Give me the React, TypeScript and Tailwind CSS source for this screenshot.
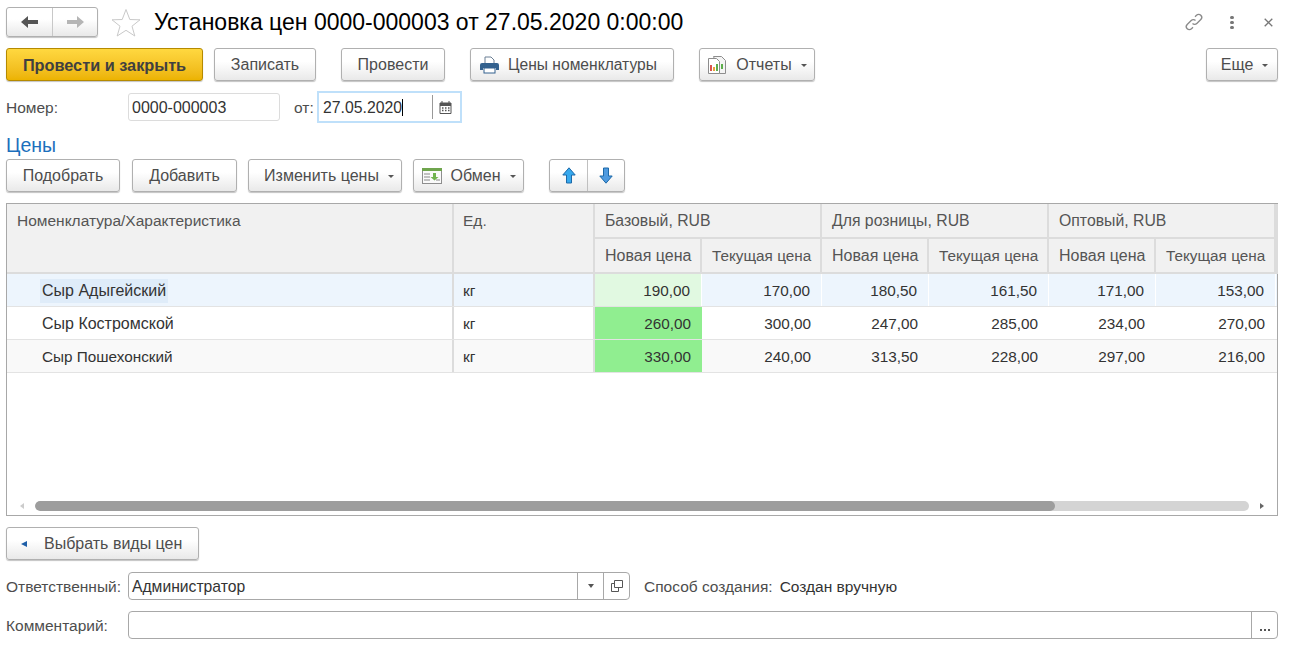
import { type FC, type ReactNode } from "react";

const Caret: FC = () => <span className="ml-[9px] mt-[1px] h-0 w-0 border-x-[3px] border-t-[3px] border-x-transparent border-t-[#555]" />;

const Btn: FC<{ w: string; children: ReactNode; className?: string }> = ({ w, children, className }) => (
  <button
    className={`flex h-[33px] shrink-0 items-center justify-center rounded-[3px] border border-[#b0b0b0] bg-gradient-to-b from-white from-40% to-[#e9e9e9] text-[16px] text-[#4d4d4d] shadow-[0_1px_1px_#c4c4c4] ${w} ${className ?? ""}`}
  >
    {children}
  </button>
);

const PrinterIcon: FC = () => (
  <svg width="19" height="18" viewBox="0 0 19 18" className="mr-[9px]">
    <path d="M6 1h5l3 3v4H5V1z" fill="#fff" stroke="#6b7f94" />
    <path d="M2 7h15a2 2 0 0 1 2 2v5h-3v-2H3v2H0V9a2 2 0 0 1 2-2z" fill="#33618e" />
    <rect x="4" y="12" width="11" height="5" fill="#fff" stroke="#33618e" />
  </svg>
);

const ReportIcon: FC = () => (
  <svg width="20" height="20" viewBox="0 0 20 20" className="mr-[9px]">
    <path d="M6.500 1.500h8l4 4v13h-6z" fill="#f4f4f4" stroke="#8d8d8d" />
    <path d="M1.500 3.500h8l3 3v12h-11z" fill="#fff" stroke="#8d8d8d" />
    <rect x="3" y="10" width="2" height="6" fill="#d9534f" />
    <rect x="6" y="12" width="2" height="4" fill="#e9a23b" />
    <rect x="9" y="9" width="2" height="7" fill="#5cae4c" />
    <rect x="14" y="9" width="2" height="5" fill="#5cae4c" />
  </svg>
);

const ExchangeIcon: FC = () => (
  <svg width="20" height="18" viewBox="0 0 20 18" className="mr-[9px]">
    <rect x=".5" y="1.500" width="19" height="15" fill="#fafafa" stroke="#8e8e8e" />
    <rect x="0" y="1" width="20" height="3" fill="#6fa54d" />
    <path d="M2 7h6M2 10h6M2 13h6M14 13h4" stroke="#888" />
    <path d="M11 6v4H8.500l4 3.500 4-3.500H14V6z" fill="#71b34f" />
  </svg>
);

const ArrowV: FC<{ down?: boolean }> = ({ down }) => (
  <svg width="14" height="17" viewBox="0 0 14 17" className={down ? "rotate-180" : ""}>
    <path d="M7 .8 13.200 8H9.500v8h-5V8H.8z" fill={down ? "#4f9be0" : "#37a9ee"} stroke="#1d69a8" />
  </svg>
);

const columns = "grid-cols-[447px_141px_107px_120px_107px_120px_107px_120px_1fr]";

const rows = [
  { name: "Сыр Адыгейский", values: ["190,00", "170,00", "180,50", "161,50", "171,00", "153,00"] },
  { name: "Сыр Костромской", values: ["260,00", "300,00", "247,00", "285,00", "234,00", "270,00"] },
  { name: "Сыр Пошехонский", values: ["330,00", "240,00", "313,50", "228,00", "297,00", "216,00"] },
];

const Head: FC<{ children?: ReactNode; className?: string }> = ({ children, className }) => (
  <div className={`whitespace-nowrap border-b-2 border-r-2 border-b-[#dcdcdc] border-r-[#dcdcdc] bg-[#f1f1f1] text-[#555] ${className ?? "px-[10px]"}`}>{children}</div>
);

const App: FC = () => {
  return (
    <div className="h-[649px] w-[1298px] overflow-hidden bg-white pl-[6px] pt-[7px] text-[15.5px] leading-[18px] text-[#4d4d4d] [font-family:'Liberation_Sans',Arial,sans-serif]">
      <div className="flex h-[30px] w-[1272px] items-center">
        <div className="flex h-[30px] w-[92px] rounded-[3px] border border-[#b0b0b0] bg-gradient-to-b from-white from-40% to-[#e9e9e9] shadow-[0_1px_1px_#c4c4c4]">
          <div className="flex w-[46px] items-center justify-center border-r border-[#c8c8c8]">
            <svg width="18" height="12" viewBox="0 0 18 12"><path d="M7 0v4h10v4H7v4L0 6z" fill="#555" /></svg>
          </div>
          <div className="flex flex-1 items-center justify-center">
            <svg width="18" height="12" viewBox="0 0 18 12"><path d="M11 0v4H1v4h10v4l7-6z" fill="#b5b5b5" /></svg>
          </div>
        </div>
        <svg width="30" height="29" viewBox="0 0 30 29" className="ml-[13px]">
          <path d="M15 1.500 18.800 11.500 29 11.800 21 18.200 23.800 28 15 22.300 6.200 28 9 18.200 1 11.800 11.200 11.500z" fill="#fff" stroke="#c9c9c9" />
        </svg>
        <h1 className="ml-[13px] text-[23px] leading-[30px] text-black">Установка цен 0000-000003 от 27.05.2020 0:00:00</h1>
        <div className="ml-auto flex items-center">
          <svg width="20" height="20" viewBox="0 0 20 20" fill="none" stroke="#8a8a8a" strokeWidth="1.300">
            <path d="M8.500 11.500a3 3 0 0 0 4.300 0l4-4a3 3 0 0 0-4.300-4.300l-1.500 1.500" />
            <path d="M11.500 8.500a3 3 0 0 0-4.300 0l-4 4a3 3 0 0 0 4.300 4.300l1.500-1.500" />
          </svg>
          <div className="ml-[26px] flex w-[4px] flex-col gap-[2px]">
            <span className="h-[3px] w-[4px] rounded-full bg-[#777]" />
            <span className="h-[3px] w-[4px] rounded-full bg-[#777]" />
            <span className="h-[3px] w-[4px] rounded-full bg-[#777]" />
          </div>
          <svg width="9" height="9" viewBox="0 0 9 9" className="ml-[30px] mr-[5px]" stroke="#777" strokeWidth="1.300">
            <path d="M.7.7l7.600 7.600M8.300.7.700 8.300" />
          </svg>
        </div>
      </div>

      <div className="mt-[11px] flex w-[1272px]">
        <button className="flex h-[33px] w-[197px] items-center justify-center rounded-[3px] border border-[#b58a00] bg-gradient-to-b from-[#ffd83f] to-[#ecb300] text-[16.300px] font-bold text-[#404040] shadow-[0_1px_1px_#c4c4c4]">
          Провести и закрыть
        </button>
        <Btn w="w-[102px]" className="ml-[11px]">Записать</Btn>
        <Btn w="w-[104px]" className="ml-[25px]">Провести</Btn>
        <Btn w="w-[204px]" className="ml-[25px] !justify-start pl-[9px] !text-[15.600px]"><PrinterIcon />Цены номенклатуры</Btn>
        <Btn w="w-[116px]" className="ml-[25px]"><ReportIcon />Отчеты<Caret /></Btn>
        <Btn w="w-[72px]" className="ml-auto pl-[5px]">Еще<Caret /></Btn>
      </div>

      <div className="mt-[10px] flex h-[32px] items-center">
        <span className="w-[122px] pt-[2px]">Номер:</span>
        <div className="flex h-[28px] w-[152px] items-center rounded-[3px] border border-[#dcdcdc] px-[3px] pt-[2px] text-[16px] text-[#333]">0000-000003</div>
        <span className="ml-[14px] w-[23px] pt-[2px]">от:</span>
        <div className="flex h-[32px] w-[145px] items-center border-2 border-[#bfe0fa] text-[#333]">
          <span className="ml-[4px] w-[110px] border-r border-[#999] text-[15.800px] leading-[24px]">
            <span className="relative top-[1px] border-r border-black">27.05.2020</span>
          </span>
          <svg width="13" height="13" viewBox="0 0 13 13" className="ml-[6px]">
            <path d="M1 2h11v10.500H1z" fill="#fff" stroke="#555" />
            <path d="M1 2h11v3H1z" fill="#555" />
            <path d="M3 0v3M10 0v3" stroke="#555" />
            <path d="M3 7h1.500M6 7h1.500M9 7h1.500M3 9.500h1.500M6 9.500h1.500M9 9.500h1.500" stroke="#555" strokeWidth="1.500" />
          </svg>
        </div>
      </div>

      <h2 className="mt-[12px] text-[19.500px] font-normal leading-[21px] text-[#1c6fbc]">Цены</h2>

      <div className="mt-[3px] flex">
        <Btn w="w-[114px]">Подобрать</Btn>
        <Btn w="w-[105px]" className="ml-[12px]">Добавить</Btn>
        <Btn w="w-[154px]" className="ml-[11px] pl-[8px]">Изменить цены<Caret /></Btn>
        <Btn w="w-[111px]" className="ml-[11px]"><ExchangeIcon />Обмен<Caret /></Btn>
        <div className="ml-[25px] flex h-[33px] w-[76px] rounded-[3px] border border-[#b0b0b0] bg-gradient-to-b from-white from-40% to-[#e9e9e9] shadow-[0_1px_1px_#c4c4c4]">
          <div className="flex w-[38px] items-center justify-center border-r border-[#c0c0c0]"><ArrowV /></div>
          <div className="flex flex-1 items-center justify-center"><ArrowV down /></div>
        </div>
      </div>

      <div className="mt-[11px] flex h-[313px] w-[1272px] flex-col border border-[#a8a8a8] text-[#333]">
        <div className={`grid h-[70px] ${columns} grid-rows-[35px_35px]`}>
          <Head className="row-span-2 px-[10px] pt-[8px]">Номенклатура/Характеристика</Head>
          <Head className="row-span-2 px-[9px] pt-[8px]">Ед.</Head>
          <Head className="col-span-2 px-[10px] pt-[8px] text-[15.800px]">Базовый, RUB</Head>
          <Head className="col-span-2 px-[10px] pt-[8px] text-[15.800px]">Для розницы, RUB</Head>
          <Head className="col-span-2 px-[10px] pt-[8px] text-[15.800px]">Оптовый, RUB</Head>
          <Head className="row-span-2 px-0" />
          {[0, 1, 2].flatMap((i) => [
            <Head key={`n${i}`} className="px-[10px] pt-[8px] text-[16px]">Новая цена</Head>,
            <Head key={`c${i}`} className="px-[10px] pt-[8px] text-[15.300px]">Текущая цена</Head>,
          ])}
        </div>
        {rows.map((row, r) => (
          <div
            key={row.name}
            className={`grid h-[33px] ${columns} border-b border-[#e3e3e3] ${r === 0 ? "bg-[#edf5fd]" : r === 2 ? "bg-[#f9f9f9]" : "bg-white"}`}
          >
            <div className={`flex items-center border-r-2 border-[#dcdcdc] pl-[33px] pt-[1px] ${r === 2 ? "text-[15.300px]" : "text-[16px]"}`}>
              <span className={`px-[2px] leading-[24px] ${r === 0 ? "bg-[#dfecf9]" : ""}`}>{row.name}</span>
            </div>
            <div className="flex items-center border-r-2 border-[#dcdcdc] pl-[9px] pt-[2px]">кг</div>
            {row.values.map((value, i) => (
              <div
                key={i}
                className={`flex items-center justify-end pr-[11px] pt-[2px] text-[15.300px] ${i === 0 ? (r === 0 ? "bg-[#e1f9e1]" : "bg-[#90ee90]") : ""} ${r === 0 ? "border-r border-white" : ""}`}
              >
                {value}
              </div>
            ))}
          </div>
        ))}
        <div className="mt-auto mb-[4px] flex h-[10px] items-center">
          <span className="ml-[13px] h-0 w-0 border-y-[3px] border-r-[4px] border-y-transparent border-r-[#ccc]" />
          <div className="ml-[11px] h-[10px] w-[1214px] overflow-hidden rounded-full bg-[#d4d4d4]">
            <div className="h-[10px] w-[1020px] rounded-full bg-[#9d9d9d]" />
          </div>
          <span className="ml-[11px] h-0 w-0 border-y-[3px] border-l-[4px] border-y-transparent border-l-[#666]" />
        </div>
      </div>

      <Btn w="w-[193px]" className="mt-[11px] !justify-start pl-[14px]">
        <span className="mr-[17px] h-0 w-0 border-y-[3.500px] border-r-[6px] border-y-transparent border-r-[#1f5fa8]" />
        Выбрать виды цен
      </Btn>

      <div className="mt-[12px] flex h-[28px] items-center">
        <span className="w-[122px] pt-[2px]">Ответственный:</span>
        <div className="flex h-[28px] w-[502px] rounded-[4px] border border-[#a8a8a8]">
          <span className="flex flex-1 items-center pl-[3px] pt-[2px] text-[15.700px] text-[#333]">Администратор</span>
          <span className="flex w-[26px] items-center justify-center border-l border-[#a8a8a8]">
            <span className="h-0 w-0 border-x-[3px] border-t-[4px] border-x-transparent border-t-[#555]" />
          </span>
          <span className="flex w-[26px] items-center justify-center border-l border-[#a8a8a8]">
            <svg width="12" height="12" viewBox="0 0 12 12" fill="none" stroke="#555">
              <path d="M3.500.5h8v7h-8z" />
              <path d="M3.500 3.500h-3v8h7v-4" />
            </svg>
          </span>
        </div>
        <span className="ml-[14px] pt-[2px]">Способ создания:</span>
        <span className="ml-[7px] pt-[2px] text-[#333]">Создан вручную</span>
      </div>

      <div className="mt-[11px] flex h-[28px] items-center">
        <span className="w-[122px] pt-[2px]">Комментарий:</span>
        <div className="flex h-[28px] w-[1150px] justify-end rounded-[4px] border border-[#a8a8a8]">
          <span className="flex w-[26px] items-end justify-center gap-[2px] border-l border-[#a8a8a8] pb-[7px]">
            <span className="h-[2px] w-[2px] bg-[#555]" />
            <span className="h-[2px] w-[2px] bg-[#555]" />
            <span className="h-[2px] w-[2px] bg-[#555]" />
          </span>
        </div>
      </div>
    </div>
  );
};

export default App;
